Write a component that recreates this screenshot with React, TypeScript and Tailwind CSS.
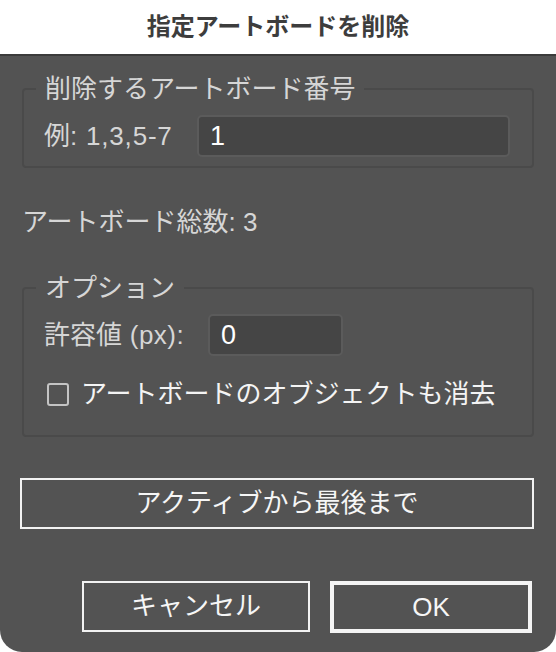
import { useState } from 'react'

const font = "font-['Liberation_Sans','Noto_Sans_CJK_JP',sans-serif]"

const Group = ({ title, children }: { title: string; children: React.ReactNode }) => (
  <fieldset className="m-0 min-w-0 rounded-[4px] border-2 border-[#4a4a4a] p-0 pl-[20px] pr-[22px]">
    <legend className="ml-[-8px] px-[9px] text-[26px] leading-[30px] text-[#d6d6d6]">{title}</legend>
    {children}
  </fieldset>
)

const TextField = ({ value, className }: { value: string; className: string }) => {
  const [v, setV] = useState(value)
  return (
    <input
      value={v}
      onChange={(e) => setV(e.target.value)}
      className={`h-[42px] rounded-[5px] border-2 border-[#5b5b5b] bg-[#454545] px-[11px] text-[27px] text-white outline-none ${font} ${className}`}
    />
  )
}

export default function App() {
  const [clearObjects, setClearObjects] = useState(false)

  return (
    <div className={`h-[652px] w-[556px] bg-white ${font}`}>
      <div className="flex h-full flex-col overflow-hidden rounded-b-[22px] bg-[#535353]">
        <div className="flex h-[56px] shrink-0 items-center justify-center border-b-2 border-[#3b3b3b] bg-white">
          <h1 className="text-[24px] font-bold leading-none text-[#3d3d3d]">指定アートボードを削除</h1>
        </div>

        <div className="flex flex-col px-[22px] pt-[18px]">
          <Group title="削除するアートボード番号">
            <div className="mb-[9px] mt-[11px] flex items-center">
              <span className="w-[153px] shrink-0 text-[26px] leading-[30px] text-[#d6d6d6]">
                例<span className="tracking-[0.8px]">: 1,3,5-7</span>
              </span>
              <TextField value="1" className="min-w-0 flex-1" />
            </div>
          </Group>

          <p className="mt-[39px] text-[26px] leading-[30px] text-[#d6d6d6]">アートボード総数: 3</p>

          <div className="mt-[36px]">
            <Group title="オプション">
              <div className="mt-[11px] flex items-center">
                <span className="w-[164px] shrink-0 text-[26px] leading-[30px] text-[#d6d6d6]">
                  許容値<span className="tracking-[0.5px]"> (px):</span>
                </span>
                <TextField value="0" className="w-[135px]" />
              </div>
              <label className="mb-[26px] ml-[3px] mt-[23px] flex cursor-pointer items-center gap-[12px]">
                <input
                  type="checkbox"
                  checked={clearObjects}
                  onChange={(e) => setClearObjects(e.target.checked)}
                  className="h-[23px] w-[22px] appearance-none rounded-[3px] border-2 border-[#c4c4c4] bg-transparent"
                />
                <span className="text-[26px] leading-[30px] text-[#f4f4f4]">アートボードのオブジェクトも消去</span>
              </label>
            </Group>
          </div>

          <button className="ml-[-2px] mt-[41px] h-[51px] border-2 border-[#f2f2f2] text-[26px] text-[#f6f6f6]">
            アクティブから最後まで
          </button>

          <div className="mt-[52px] flex justify-end gap-[20px] pr-[2px]">
            <button className="h-[51px] w-[228px] border-2 border-[#f2f2f2] text-[26px] text-[#f6f6f6]">
              キャンセル
            </button>
            <button className="h-[52px] w-[202px] border-4 border-[#f4f4f4] text-[26px] text-[#f6f6f6]">
              OK
            </button>
          </div>
        </div>
      </div>
    </div>
  )
}
